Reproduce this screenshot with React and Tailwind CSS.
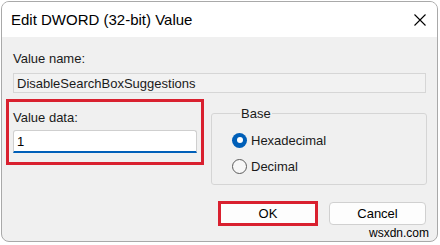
export default function App() {
  const font = { fontFamily: '"Liberation Sans", Arial, sans-serif' };

  return (
    <div className="h-[245px] w-[440px] bg-white pl-px pt-px" style={font}>
      <div className="relative flex h-[241px] w-[437px] flex-col overflow-hidden rounded-[8px] border border-[#a9a9a9] bg-[#f0f0f0] text-[13px] leading-[15px] text-[#1a1a1a]">
        {/* title bar */}
        <div className="flex h-[35px] items-center justify-between bg-white pl-[9px] pr-[11px]">
          <span className="text-[15px] leading-[17px] text-black">Edit DWORD (32-bit) Value</span>
          <svg width="12" height="12" viewBox="0 0 12 12" className="text-black">
            <path d="M0.5 0.5 L11.5 11.5 M11.5 0.5 L0.5 11.5" stroke="currentColor" strokeWidth="1.1" fill="none" />
          </svg>
        </div>

        {/* body */}
        <div className="flex-1 pl-[4px] pt-[14px]">
          <div className="ml-[7px]">Value name:</div>
          <div className="ml-[7px] mt-[7px] flex h-[20px] w-[413px] items-center border border-[#d6d6d6] bg-[#f2f2f2] pl-[3px]">
            DisableSearchBoxSuggestions
          </div>

          <div className="mt-[6px] flex items-start">
            <div className="h-[66px] w-[198px] border-[3px] border-[#d9202f] pl-[4px] pt-[8px]">
              <div>Value data:</div>
              <div className="mt-[5px] flex h-[23px] w-[184px] items-center rounded-t-[3px] border border-b-2 border-[#cfcfcf] border-b-[#005fb8] bg-white pl-[3px] text-black">
                1
              </div>
            </div>

            <fieldset className="ml-[7px] mt-[7px] h-[79px] w-[216px] rounded-[3px] border border-[#d5d5d5] pl-[20px]">
              <legend className="ml-[8px] px-[1px]">Base</legend>
              <div className="mt-[9px] flex h-[20px] items-center gap-[4px]">
                <span className="flex h-[15px] w-[15px] items-center justify-center rounded-full bg-[#005fb8]">
                  <span className="h-[6px] w-[6px] rounded-full bg-white" />
                </span>
                <span>Hexadecimal</span>
              </div>
              <div className="mt-[6px] flex h-[20px] items-center gap-[4px]">
                <span className="h-[15px] w-[15px] rounded-full border border-[#5c5c5c] bg-[#f7f7f7]" />
                <span>Decimal</span>
              </div>
            </fieldset>
          </div>

          <div className="mt-[16px] flex items-center justify-end gap-[11px] pr-[11px]">
            <button className="flex h-[25px] w-[100px] items-center justify-center border-[3px] border-[#d9202f] bg-[#fdfdfd] text-black">
              OK
            </button>
            <button className="flex h-[23px] w-[97px] items-center justify-center rounded-[4px] border border-[#d0d0d0] bg-[#fdfdfd] text-black">
              Cancel
            </button>
          </div>
        </div>

        <span className="absolute bottom-[1px] right-[8px] text-[12px] leading-[13px] text-black">wsxdn.com</span>
      </div>
    </div>
  );
}
